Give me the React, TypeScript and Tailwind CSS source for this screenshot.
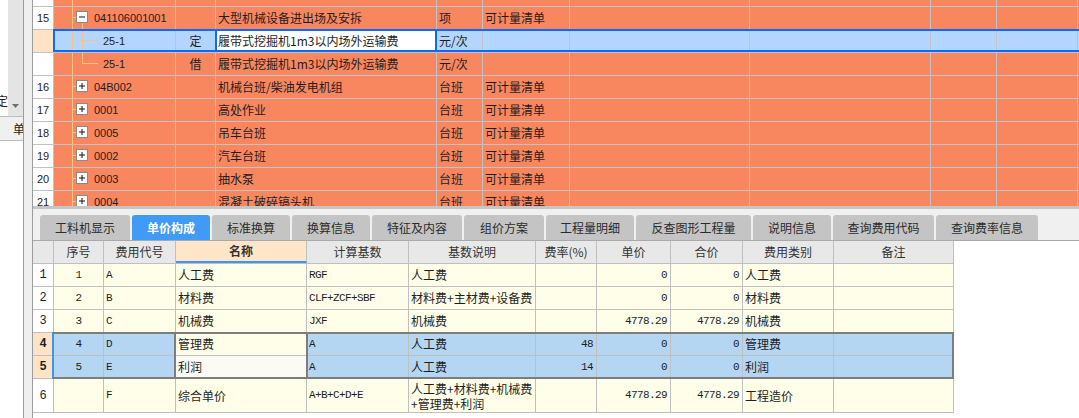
import React from 'react';

type Kind = 'root' | 'open' | 'child' | 'childLast' | 'closed';

type TopRow = {
  no: string;
  kind: Kind;
  code: string;
  type: string;
  name: string;
  unit: string;
  feat: string;
  selected?: boolean;
};

const topRows: TopRow[] = [
  { no: '', kind: 'root', code: '', type: '', name: '', unit: '', feat: '' },
  { no: '15', kind: 'open', code: '041106001001', type: '', name: '大型机械设备进出场及安拆', unit: '项', feat: '可计量清单' },
  { no: '', kind: 'child', code: '25-1', type: '定', name: '履带式挖掘机1m3以内场外运输费', unit: '元/次', feat: '', selected: true },
  { no: '', kind: 'childLast', code: '25-1', type: '借', name: '履带式挖掘机1m3以内场外运输费', unit: '元/次', feat: '' },
  { no: '16', kind: 'closed', code: '04B002', type: '', name: '机械台班/柴油发电机组', unit: '台班', feat: '可计量清单' },
  { no: '17', kind: 'closed', code: '0001', type: '', name: '高处作业', unit: '台班', feat: '可计量清单' },
  { no: '18', kind: 'closed', code: '0005', type: '', name: '吊车台班', unit: '台班', feat: '可计量清单' },
  { no: '19', kind: 'closed', code: '0002', type: '', name: '汽车台班', unit: '台班', feat: '可计量清单' },
  { no: '20', kind: 'closed', code: '0003', type: '', name: '抽水泵', unit: '台班', feat: '可计量清单' },
  { no: '21', kind: 'closed', code: '0004', type: '', name: '混凝土破碎镐头机', unit: '台班', feat: '可计量清单' },
];

const tabs = [
  { label: '工料机显示', w: 'w-[90px]' },
  { label: '单价构成', w: 'w-[78px]', active: true },
  { label: '标准换算', w: 'w-[78px]' },
  { label: '换算信息', w: 'w-[78px]' },
  { label: '特征及内容', w: 'w-[90px]' },
  { label: '组价方案', w: 'w-[80px]' },
  { label: '工程量明细', w: 'w-[88px]' },
  { label: '反查图形工程量', w: 'w-[115px]' },
  { label: '说明信息', w: 'w-[78px]' },
  { label: '查询费用代码', w: 'w-[101px]' },
  { label: '查询费率信息', w: 'w-[102px]' },
];

const MONO = "font-['Liberation_Mono',monospace] text-[11px] tracking-[-0.6px]";
const CJK = "font-['Noto_Sans_CJK_SC',sans-serif] text-[12px]";

const colW = ['w-[21px]', 'w-[50px]', 'w-[72px]', 'w-[131px]', 'w-[102px]', 'w-[127px]', 'w-[61px]', 'w-[74px]', 'w-[72px]', 'w-[91px]', 'w-[120px]'];
const colAlign = [
  'justify-center',
  'justify-center',
  'justify-start pl-[2px]',
  'justify-start pl-[2px]',
  'justify-start pl-[2px]',
  'justify-start pl-[2px]',
  'justify-end pr-[3px]',
  'justify-end pr-[3px]',
  'justify-end pr-[3px]',
  'justify-start pl-[2px]',
  'justify-start',
];
const colFont = ["font-['Liberation_Mono',monospace] text-[12px]", MONO, MONO, CJK, MONO, CJK, MONO, MONO, MONO, CJK, CJK];

const headers = ['', '序号', '费用代号', '名称', '计算基数', '基数说明', '费率(%)', '单价', '合价', '费用类别', '备注'];

const bodyRows: string[][] = [
  ['1', '1', 'A', '人工费', 'RGF', '人工费', '', '0', '0', '人工费', ''],
  ['2', '2', 'B', '材料费', 'CLF+ZCF+SBF', '材料费+主材费+设备费', '', '0', '0', '材料费', ''],
  ['3', '3', 'C', '机械费', 'JXF', '机械费', '', '4778.29', '4778.29', '机械费', ''],
  ['4', '4', 'D', '管理费', 'A', '人工费', '48', '0', '0', '管理费', ''],
  ['5', '5', 'E', '利润', 'A', '人工费', '14', '0', '0', '利润', ''],
];

function Tree({ kind }: { kind: Kind }) {
  const line = '#fbc47c';
  const box = (x: number, plus: boolean) => (
    <>
      <rect x={x + 0.5} y={4.5} width={11} height={11} fill="#fff" stroke="#8a8a8a" />
      <line x1={x + 3} y1={10} x2={x + 9} y2={10} stroke="#111" />
      {plus && <line x1={x + 6} y1={7} x2={x + 6} y2={13} stroke="#111" />}
    </>
  );
  if (kind === 'root') {
    return (
      <svg width={40} height={22} className="shrink-0">
        <line x1={18.5} y1={16} x2={18.5} y2={22} stroke={line} />
        {box(12, false)}
      </svg>
    );
  }
  if (kind === 'open' || kind === 'closed') {
    return (
      <svg width={40} height={22} className="shrink-0">
        <line x1={18.5} y1={0} x2={18.5} y2={22} stroke={line} />
        <line x1={18.5} y1={10.5} x2={22} y2={10.5} stroke={line} />
        {kind === 'open' && <line x1={28.5} y1={16} x2={28.5} y2={22} stroke={line} />}
        {box(22, kind === 'closed')}
      </svg>
    );
  }
  return (
    <svg width={49} height={22} className="shrink-0">
      <line x1={18.5} y1={0} x2={18.5} y2={22} stroke={line} />
      <line x1={28.5} y1={0} x2={28.5} y2={kind === 'child' ? 22 : 10.5} stroke={line} />
      <line x1={28.5} y1={10.5} x2={44} y2={10.5} stroke={line} />
    </svg>
  );
}

function SidePanel() {
  return (
    <div className="flex w-[24px] shrink-0 flex-col border-r border-[#9c9c9c] bg-white">
      <div className="flex h-[116px]">
        <div className={`flex w-[8px] items-end justify-end overflow-hidden pb-[6px] ${CJK}`}>
          <span className="shrink-0">定</span>
        </div>
        <div className="flex w-[15px] items-end justify-center bg-[#e4e4e4] pb-[8px]">
          <svg width={7} height={4}>
            <path d="M0 0 L7 0 L3.5 4 Z" fill="#6f6f6f" />
          </svg>
        </div>
      </div>
      <div className={`flex h-[25px] items-center overflow-hidden border-y border-[#bdbdbd] bg-[#f0f0f0] pl-[13px] ${CJK}`}>
        <span className="shrink-0">单</span>
      </div>
    </div>
  );
}

function TopGrid() {
  const cell = 'flex h-full shrink-0 items-center overflow-hidden whitespace-nowrap border-r border-[#c3c3c3]';
  return (
    <div className="h-[206px] shrink-0 overflow-hidden">
      <div className="-mt-[16px]">
        {topRows.map((r, i) => {
          const bg = r.selected ? 'bg-[#b3d5ff]' : 'bg-[#f8865f]';
          return (
            <div key={i} className="relative flex h-[23px] border-b border-[#c3c3c3]">
              <div className={`${cell} w-[21px] justify-center font-['Liberation_Sans',sans-serif] text-[11px] ${r.selected ? 'bg-[#ffe3c4]' : 'bg-white'}`}>
                {r.no}
              </div>
              <div className={`${cell} w-[122px] font-['Liberation_Sans',sans-serif] text-[11px] ${bg}`}>
                <Tree kind={r.kind} />
                <span>{r.code}</span>
              </div>
              <div className={`${cell} w-[40px] justify-center ${CJK} ${bg}`}>{r.type}</div>
              <div className={`${cell} w-[221px] pl-[2px] ${CJK} ${r.selected ? 'bg-white' : bg}`}>{r.name}</div>
              <div className={`${cell} w-[46px] pl-[2px] ${CJK} ${bg}`}>{r.unit}</div>
              <div className={`${cell} w-[87px] pl-[2px] ${CJK} ${bg}`}>{r.feat}</div>
              <div className={`${cell} w-[180px] ${bg}`} />
              <div className={`${cell} w-[181px] ${bg}`} />
              <div className={`${cell} w-[66px] ${bg}`} />
              <div className={`${cell} w-[81px] ${bg}`} />
              <div className={`h-full flex-1 ${bg}`} />
              {r.selected && (
                <>
                  <div className="pointer-events-none absolute -top-px bottom-0 left-[20px] right-0 border-2 border-r-0 border-[#0a6cff]" />
                  <div className="pointer-events-none absolute -top-px bottom-0 left-[182px] w-[222px] border-2 border-[#0a6cff]" />
                </>
              )}
            </div>
          );
        })}
      </div>
    </div>
  );
}

function Tabs() {
  return (
    <div className="flex h-[32px] shrink-0 items-end gap-[2px] border-b border-[#a9a9a9] bg-[#f0f0f0] pl-[7px]">
      {tabs.map((t) => (
        <div
          key={t.label}
          className={`flex h-[25px] shrink-0 items-center justify-center rounded-t-[3px] ${CJK} ${t.w} ${
            t.active ? 'bg-[#3f9bf6] font-bold text-white' : 'bg-[#c4c4c4] text-[#2b2b2b]'
          }`}
        >
          {t.label}
        </div>
      ))}
    </div>
  );
}

function PriceTable() {
  const cell = 'flex h-full shrink-0 items-center overflow-hidden whitespace-nowrap border-r border-[#c0c0c0]';
  const renderRow = (r: string[], i: number) => {
    const sel = i === 3 || i === 4;
    return (
      <div key={i} className="flex h-[23px] border-b border-[#c0c0c0]">
        {r.map((v, c) => {
          let bg = 'bg-[#ffffe9]';
          if (c === 0) bg = sel ? 'bg-[#ffe3c6] font-bold' : 'bg-white';
          else if (sel && c === 3) bg = i === 3 ? 'bg-[#ffffe9]' : 'bg-[#fbfbf3]';
          else if (sel) bg = 'bg-[#b5d6f2]';
          return (
            <div key={c} className={`${cell} ${colW[c]} ${colAlign[c]} ${colFont[c]} ${bg}`}>
              {v}
            </div>
          );
        })}
      </div>
    );
  };
  return (
    <div className="flex-1 bg-white">
      <div className="w-[921px]">
        <div className="flex h-[23px] border-b border-[#c0c0c0]">
          {headers.map((h, c) => (
            <div
              key={c}
              className={`${cell} ${colW[c]} justify-center ${CJK} text-[#333] ${
                c === 3 ? 'border-b-2 border-b-[#3c96f0] bg-[#ffe6c8] font-bold text-[#111]' : 'bg-[#e8e8e8]'
              }`}
            >
              {h}
            </div>
          ))}
        </div>
        {bodyRows.slice(0, 3).map((r, i) => renderRow(r, i))}
        <div className="relative">
          {bodyRows.slice(3).map((r, i) => renderRow(r, i + 3))}
          <div className="pointer-events-none absolute -top-px left-[19px] h-[47px] w-[902px] border-2 border-[#7d7d7d] border-l-[#3c96f0]" />
          <div className="pointer-events-none absolute -top-px left-[141px] h-[47px] w-[134px] border-2 border-[#7d7d7d]" />
        </div>
        <div className="flex h-[34px] border-b border-[#c0c0c0]">
          <div className={`${cell} w-[21px] justify-center bg-white ${colFont[0]}`}>6</div>
          <div className={`${cell} w-[50px] bg-[#ffffe9]`} />
          <div className={`${cell} w-[72px] pl-[2px] bg-[#ffffe9] ${MONO}`}>F</div>
          <div className={`${cell} w-[131px] pl-[2px] bg-[#ffffe9] ${CJK}`}>综合单价</div>
          <div className={`${cell} w-[102px] pl-[2px] bg-[#ffffe9] ${MONO}`}>A+B+C+D+E</div>
          <div className={`${cell} w-[127px] pl-[2px] bg-[#ffffe9] ${CJK} leading-[15px]`}>
            <span>
              人工费+材料费+机械费
              <br />
              +管理费+利润
            </span>
          </div>
          <div className={`${cell} w-[61px] bg-[#ffffe9]`} />
          <div className={`${cell} w-[74px] justify-end pr-[3px] bg-[#ffffe9] ${MONO}`}>4778.29</div>
          <div className={`${cell} w-[72px] justify-end pr-[3px] bg-[#ffffe9] ${MONO}`}>4778.29</div>
          <div className={`${cell} w-[91px] pl-[2px] bg-[#ffffe9] ${CJK}`}>工程造价</div>
          <div className={`${cell} w-[120px] bg-[#ffffe9]`} />
        </div>
      </div>
    </div>
  );
}

export default function App() {
  return (
    <div className={`flex h-[418px] w-[1079px] overflow-hidden bg-white text-[#1e1e1e] ${CJK}`}>
      <SidePanel />
      <div className="w-[8px] shrink-0 bg-[#efefef]" />
      <div className="flex min-w-0 flex-1 flex-col border-l border-[#9c9c9c]">
        <TopGrid />
        <div className="h-[3px] shrink-0 bg-[#c6c6c6]" />
        <Tabs />
        <PriceTable />
      </div>
    </div>
  );
}
